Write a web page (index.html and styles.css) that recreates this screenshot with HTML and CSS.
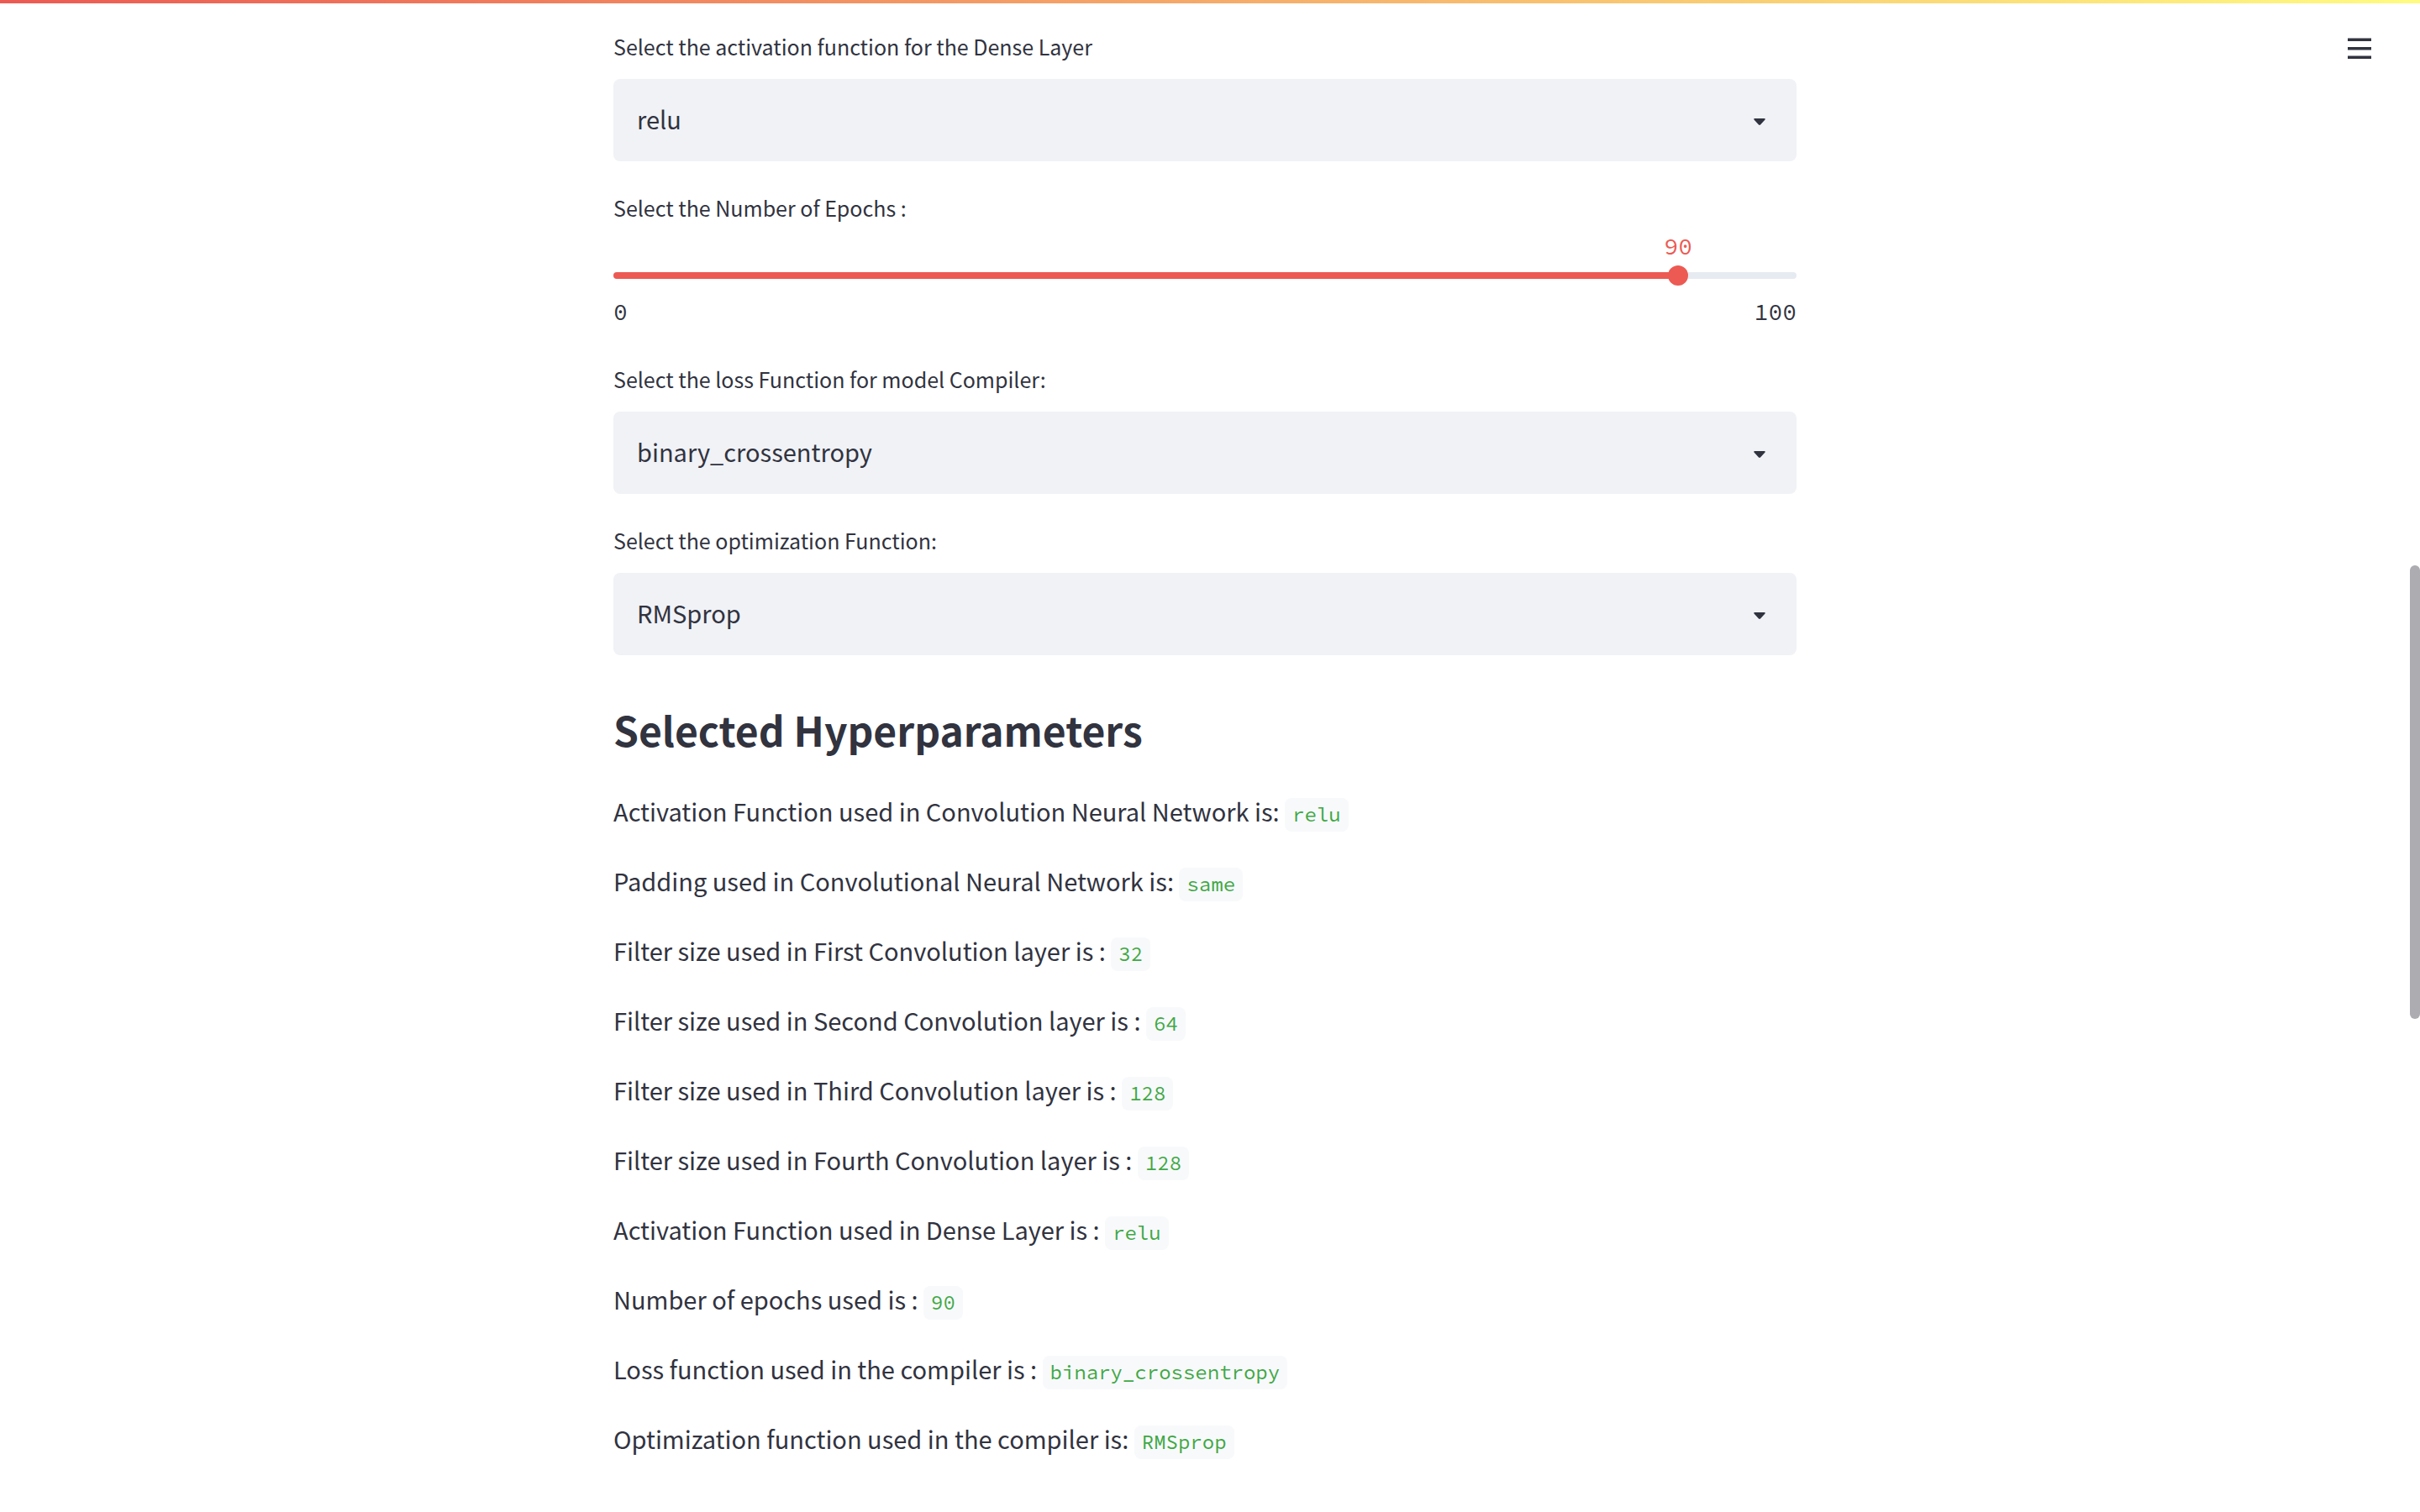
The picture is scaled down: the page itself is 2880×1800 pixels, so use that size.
FILE: index.html
```html
<!DOCTYPE html>
<html lang="en">
<head>
<meta charset="utf-8">
<title>Model Hyperparameters</title>
<meta name="viewport" content="width=device-width, initial-scale=1">
<link rel="stylesheet" href="styles.css">
</head>
<body>
<div class="decoration"></div>
<button class="menu-button" type="button" aria-label="Main menu">
  <svg width="28" height="26" viewBox="0 0 28 26" aria-hidden="true"><path d="M0 .6h28V4H0zM0 11h28v3.400H0zM0 21.600h28V25H0z" fill="currentColor"/></svg>
</button>
<main class="container">
  <div class="field">
    <label class="label" for="dense">Select the activation function for the Dense Layer</label>
    <div class="select-box">
      <select class="select" id="dense"><option>relu</option></select>
      <svg class="caret" viewBox="0 0 14 8" aria-hidden="true"><path d="M1 0h12q1.400.600.500 1.500L8 7.500q-1 .900-2 0L.500 1.500Q-.400.600 1 0z" fill="currentColor"/></svg>
    </div>
  </div>
  <div class="field">
    <label class="label" for="epochs">Select the Number of Epochs :</label>
    <div class="slider">
      <div class="slider-value"><output class="value" for="epochs" style="left: 90%">90</output></div>
      <div class="track" style="--value: 90%">
        <input class="range" id="epochs" type="range" min="0" max="100" value="90">
      </div>
      <div class="ticks"><span>0</span><span>100</span></div>
    </div>
  </div>
  <div class="field">
    <label class="label" for="loss">Select the loss Function for model Compiler:</label>
    <div class="select-box">
      <select class="select" id="loss"><option>binary_crossentropy</option></select>
      <svg class="caret" viewBox="0 0 14 8" aria-hidden="true"><path d="M1 0h12q1.400.600.500 1.500L8 7.500q-1 .900-2 0L.500 1.500Q-.400.600 1 0z" fill="currentColor"/></svg>
    </div>
  </div>
  <div class="field">
    <label class="label" for="optimizer">Select the optimization Function:</label>
    <div class="select-box">
      <select class="select" id="optimizer"><option>RMSprop</option></select>
      <svg class="caret" viewBox="0 0 14 8" aria-hidden="true"><path d="M1 0h12q1.400.600.500 1.500L8 7.500q-1 .900-2 0L.500 1.500Q-.400.600 1 0z" fill="currentColor"/></svg>
    </div>
  </div>
  <section class="summary">
    <h2 class="heading">Selected Hyperparameters</h2>
    <p class="line">Activation Function used in Convolution Neural Network is: <code class="code">relu</code></p>
    <p class="line">Padding used in Convolutional Neural Network is: <code class="code">same</code></p>
    <p class="line">Filter size used in First Convolution layer is : <code class="code">32</code></p>
    <p class="line">Filter size used in Second Convolution layer is : <code class="code">64</code></p>
    <p class="line">Filter size used in Third Convolution layer is : <code class="code">128</code></p>
    <p class="line">Filter size used in Fourth Convolution layer is : <code class="code">128</code></p>
    <p class="line">Activation Function used in Dense Layer is : <code class="code">relu</code></p>
    <p class="line">Number of epochs used is : <code class="code">90</code></p>
    <p class="line">Loss function used in the compiler is : <code class="code">binary_crossentropy</code></p>
    <p class="line">Optimization function used in the compiler is: <code class="code">RMSprop</code></p>
  </section>
</main>
<div class="scroll-thumb"></div>
</body>
</html>
```

FILE: styles.css
```css
:root {
  --text: #31333f;
  --accent: #ec5a53;
  --sans: "Source Sans Pro", "Noto Sans CJK SC", sans-serif;
  --mono: "Source Code Pro", "Noto Sans Mono CJK SC", "DejaVu Sans Mono", monospace;
}

* {
  box-sizing: border-box;
}

body {
  margin: 0;
  padding-right: 12px;
  background: #fff;
  color: var(--text);
  font-family: var(--sans);
  font-size: 29px;
  line-height: 51px;
}

.decoration {
  position: fixed;
  top: 0;
  left: 0;
  right: 0;
  height: 4px;
  background: linear-gradient(90deg, #ec5a53, #fffb80);
}

.menu-button {
  position: fixed;
  top: 33px;
  right: 46px;
  display: flex;
  padding: 12px;
  border: 0;
  background: none;
  color: var(--text);
}

.container {
  display: flex;
  flex-direction: column;
  gap: 32px;
  max-width: 1408px;
  margin: 0 auto;
  padding-top: 32px;
}

.field {
  display: flex;
  flex-direction: column;
  gap: 16px;
}

.label {
  font-size: 25px;
  line-height: 46px;
}

.select-box {
  position: relative;
  display: flex;
}

.select {
  appearance: none;
  width: 100%;
  height: 98px;
  padding: 0 28px 4px;
  border: 0;
  border-radius: 8px;
  background: #f0f2f6;
  color: inherit;
  font: inherit;
}

.caret {
  position: absolute;
  top: 47px;
  right: 37px;
  width: 14px;
  height: 8px;
  pointer-events: none;
}

.slider {
  display: flex;
  flex-direction: column;
  font-family: var(--mono);
  font-size: 28px;
  line-height: 38px;
}

.slider-value {
  position: relative;
  height: 38px;
}

.value {
  position: absolute;
  bottom: 12px;
  transform: translateX(-50%);
  color: var(--accent);
}

.track {
  height: 8px;
  border-radius: 4px;
  background: linear-gradient(90deg, var(--accent) var(--value), #e6eaf1 var(--value));
}

.range {
  appearance: none;
  display: block;
  width: calc(100% + 24px);
  height: 24px;
  margin: -8px -12px;
  background: none;
}

.range::-webkit-slider-thumb {
  appearance: none;
  width: 24px;
  height: 24px;
  border-radius: 50%;
  background: var(--accent);
}

.ticks {
  display: flex;
  justify-content: space-between;
  padding: 20px 0 6px;
}

.summary {
  display: flex;
  flex-direction: column;
  gap: 32px;
  padding-top: 16px;
}

.heading {
  margin: 0;
  font-size: 48px;
  line-height: 80px;
  font-weight: 700;
}

.line {
  margin: 0;
}

.code {
  display: inline-block;
  padding: 0 9px;
  border-radius: 8px;
  background: #f8f9fb;
  color: #3fa845;
  font-family: var(--mono);
  font-size: 24px;
  line-height: 40px;
}

.scroll-thumb {
  position: fixed;
  top: 37.4%;
  right: 0;
  width: 12px;
  height: 30%;
  border-radius: 6px;
  background: #adacb1;
}
```
